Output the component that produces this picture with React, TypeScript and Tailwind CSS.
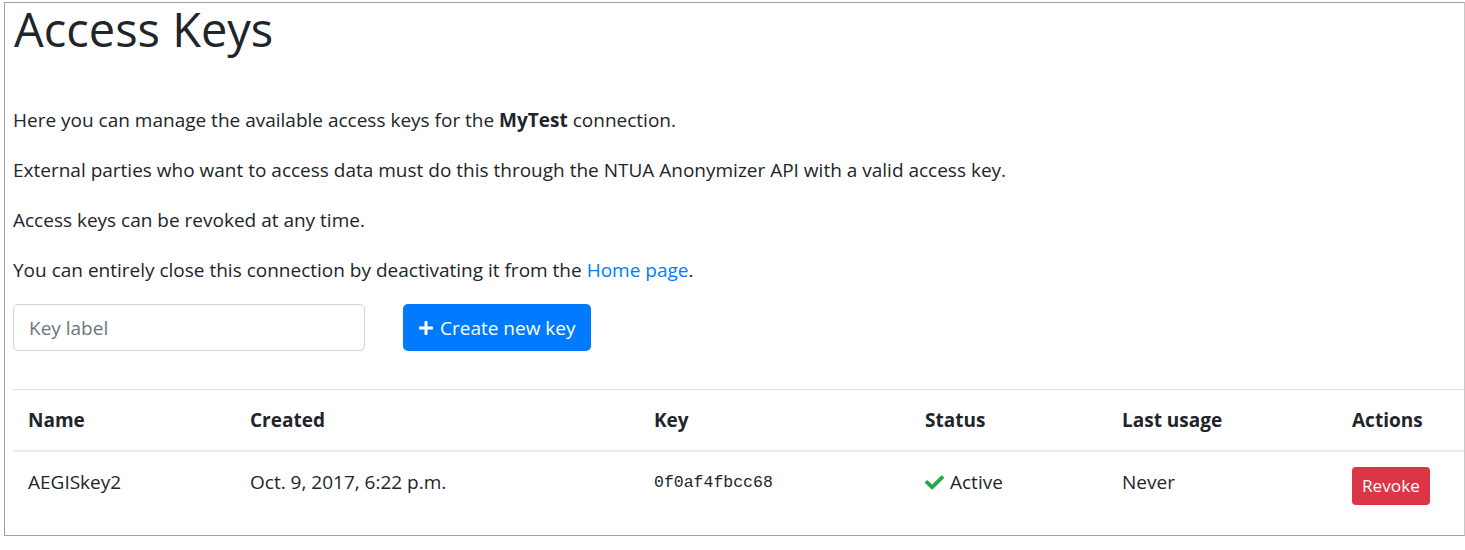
import React from "react";
import { FaCheck, FaPlus } from "react-icons/fa";

const font = { fontFamily: '"Open Sans", "Noto Sans", sans-serif' };

export default function App() {
  return (
    <div className="pl-[4px] pt-[2px] bg-white text-[#212529]" style={font}>
      <div className="w-[1461px] h-[534px] border border-[#a0a0a0] border-r-[#c8c8c8] pl-[8px] overflow-hidden text-[19px] leading-[30px]">
        <h1 className="text-[47px] leading-[52px] font-normal mt-0 mb-[50px] pl-[1px]">Access Keys</h1>
        <p className="mb-[20px]">
          Here you can manage the available access keys for the <b className="font-bold">MyTest</b> connection.
        </p>
        <p className="mb-[20px]">
          External parties who want to access data must do this through the NTUA Anonymizer API with a valid access key.
        </p>
        <p className="mb-[20px]">Access keys can be revoked at any time.</p>
        <p className="mb-[19px]">
          You can entirely close this connection by deactivating it from the{" "}
          <a className="text-[#007bff]" href="#">Home page</a>.
        </p>
        <div className="flex items-center gap-[38px] mb-[38px]">
          <input
            className="w-[352px] h-[47px] border border-[#ced4da] rounded-[5px] px-[15px] text-[19px] placeholder:text-[#6c757d] outline-none"
            placeholder="Key label"
          />
          <button className="h-[47px] px-[15px] bg-[#007bff] text-white rounded-[5px] flex items-center gap-[6px] text-[19px]">
            <FaPlus className="w-[16px] h-[16px]" />
            Create new key
          </button>
        </div>
        <table className="w-[1452px] border-collapse table-fixed">
          <colgroup>
            <col className="w-[222px]" />
            <col className="w-[404px]" />
            <col className="w-[271px]" />
            <col className="w-[197px]" />
            <col className="w-[230px]" />
            <col />
          </colgroup>
          <thead>
            <tr className="border-t border-[#dee2e6] border-b-2 border-b-[#e9ecef] font-bold text-left">
              <th className="px-[15px] py-[15px] text-left align-top">Name</th>
              <th className="px-[15px] py-[15px] text-left align-top">Created</th>
              <th className="px-[15px] py-[15px] text-left align-top">Key</th>
              <th className="px-[15px] py-[15px] text-left align-top">Status</th>
              <th className="px-[15px] py-[15px] text-left align-top">Last usage</th>
              <th className="px-[15px] py-[15px] text-left align-top">Actions</th>
            </tr>
          </thead>
          <tbody>
            <tr>
              <td className="px-[15px] py-[15px] align-top">AEGISkey2</td>
              <td className="px-[15px] py-[15px] align-top">Oct. 9, 2017, 6:22 p.m.</td>
              <td className="px-[15px] pt-[16px] pb-[14px] align-top text-[16.5px]" style={{ fontFamily: '"Liberation Mono", monospace' }}>0f0af4fbcc68</td>
              <td className="px-[15px] py-[15px] align-top">
                <span className="flex items-center gap-[6px]">
                  <FaCheck className="w-[19px] h-[19px] text-[#28a745]" />
                  Active
                </span>
              </td>
              <td className="px-[15px] py-[15px] align-top">Never</td>
              <td className="px-[15px] py-[15px] align-top">
                <button className="bg-[#dc3545] text-white rounded-[4px] px-[10px] h-[38px] text-[17.2px] leading-[26px]">Revoke</button>
              </td>
            </tr>
          </tbody>
        </table>
      </div>
    </div>
  );
}
